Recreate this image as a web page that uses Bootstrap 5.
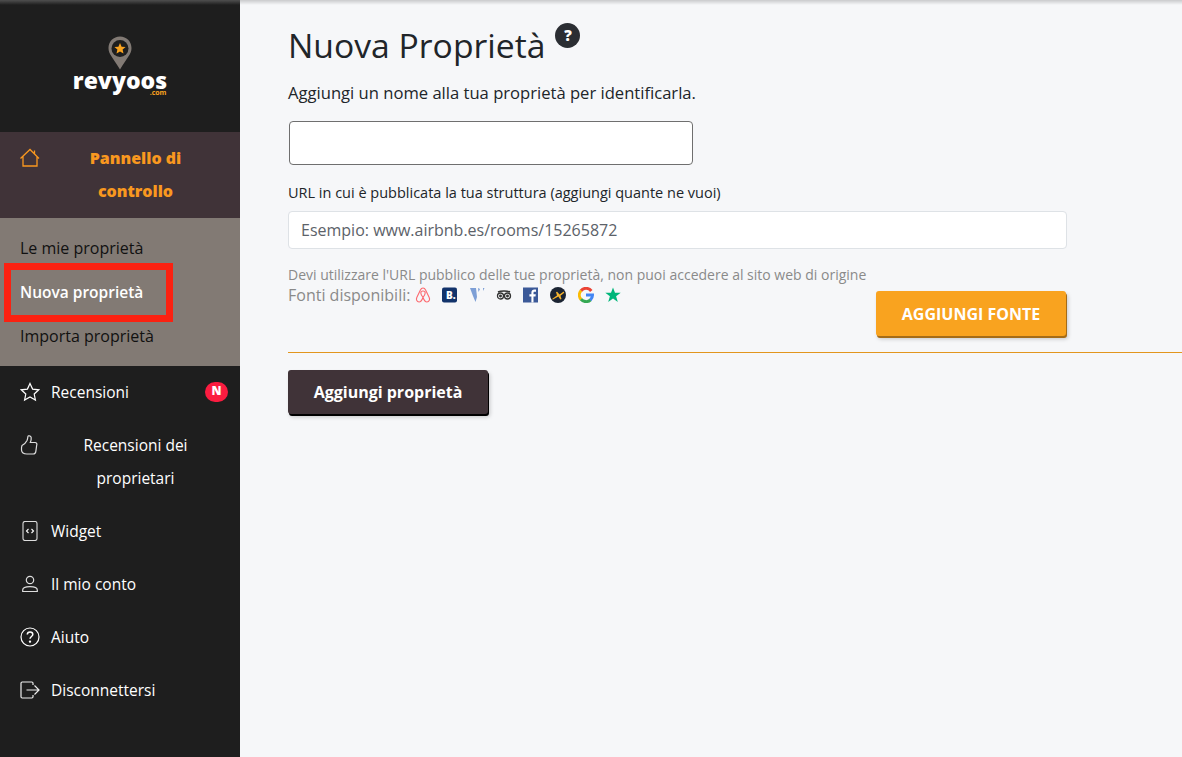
<!DOCTYPE html>
<html lang="it">
<head>
    <meta charset="UTF-8">
    <meta name="viewport" content="width=device-width, initial-scale=1.0">
    <title>Nuova Proprietà</title>
    <link rel="stylesheet" href="https://cdn.jsdelivr.net/npm/bootstrap@5.3.0/dist/css/bootstrap.min.css">
    <style>
        body { font-family: "Open Sans", sans-serif; background: #f6f7f9; color: #212529; height: 757px; overflow: hidden; position: relative; }
        .app-shell { height: 757px; }
        .side { width: 240px; background: #1e1e1e; flex-shrink: 0; position: relative; }
        .top-fade { position: absolute; top: 0; left: 0; right: 0; height: 5px; z-index: 2; pointer-events: none; background: linear-gradient(#0000002e, #0000); }
        .side .top-fade { background: linear-gradient(#ffffff38, #fff0); }
        .logo-area { height: 132px; padding-top: 36px; }
        .logo-word { color: #fff; font-weight: 800; font-size: 23px; line-height: 20px; }
        .logo-com { color: #f9a31f; font-size: 7px; line-height: 6px; font-weight: 700; text-align: right; width: 93px; }
        .menu-row { display: flex; align-items: flex-start; padding: 10px 20px; line-height: 33px; font-size: 15.5px; color: #fff; text-decoration: none; }
        .menu-row svg { flex-shrink: 0; width: 20px; height: 20px; margin: 6px 11px 0 0; }
        .menu-label { flex-grow: 1; }
        .menu-center { text-align: center; }
        .menu-active { background: #403338; color: #f9981f; font-weight: 800; font-size: 16px; }
        .sub-menu { background: #827a74; padding: 8px 0; }
        .sub-row { display: block; height: 44px; line-height: 44px; padding-left: 20px; color: #111; font-size: 16px; text-decoration: none; }
        .sub-row.on { color: #fff; font-weight: 600; font-size: 15.5px; }
        .new-pill { width: 23px; height: 20px; border-radius: 10px; background: #fb1c40; color: #fff; font-size: 12px; font-weight: 800; line-height: 18px; text-align: center; margin: 6px -8px 0 0; }
        .red-box { position: absolute; left: 4px; top: 263px; width: 169px; height: 59px; border: 7px solid #fb2111; z-index: 3; }
        .page-body { padding-left: 48px; padding-top: 23px; }
        .page-title { font-size: 33.7px; font-weight: 500; line-height: 44px; margin: 0; }
        .help-dot { width: 25px; height: 25px; border-radius: 50%; background: #2b2e33; color: #fff; font-size: 15px; font-weight: 800; line-height: 25px; text-align: center; margin-left: 10px; }
        .intro { font-size: 16.6px; line-height: 22px; margin: 15px 0 0; }
        .name-input { width: 404px; height: 44px; margin: 17px 0 0 1px; border-color: #6f6f6f; border-radius: 4px; background: #fff; }
        .url-label { font-size: 14.5px; line-height: 18px; margin: 19px 0 0; }
        .url-input { width: 779px; height: 38px; margin-top: 9px; font-size: 16px; color: #495057; border-radius: 4px; padding-left: 12px; }
        .url-input::placeholder { color: #5c6269; opacity: 1; }
        .hint { font-size: 14px; color: #8a8a8a; line-height: 18px; margin-top: 17px; }
        .sources-row { width: 779px; }
        .sources { font-size: 16px; color: #8a8a8a; line-height: 22px; }
        .sources svg { width: 16px; height: 16px; margin-left: 7px; vertical-align: -2px; }
        .sources svg:first-of-type { margin-left: 0; }
        .btn-source { background: #f9a31f; color: #fff; border: 0; border-radius: 3px; font-weight: 700; font-size: 16px; width: 190px; height: 45px; box-shadow: 1px 2px 0 #a56c17, 2px 3px 4px #0003; margin: 7px 1px 0 0; }
        .btn-source:hover { background: #f9a31f; color: #fff; }
        .gold-rule { height: 1px; background: #e2961e; margin: 16px 0 17px; }
        .btn-add { background: #403338; color: #fff; border: 0; border-radius: 3px; font-weight: 700; font-size: 16px; width: 200px; height: 44px; box-shadow: 1px 2px 0 #000, 2px 3px 4px #0003; }
        .btn-add:hover { background: #403338; color: #fff; }
    </style>
</head>
<body>
    <div class="app-shell d-flex">
        <nav class="side">
            <div class="top-fade"></div>
            <div class="logo-area d-flex flex-column align-items-center">
                <svg width="24" height="34" viewBox="0 0 24 34">
                    <path d="M12 0.500C5.500 .5 .5 5.500 .5 12c0 6 4 9 11.500 21.500C19.500 21 23.500 18 23.500 12 23.500 5.500 18.500 .5 12 .5z" fill="#827a74"/>
                    <circle cx="12" cy="12.500" r="8.500" fill="#1e1e1e"/>
                    <path d="M12 7l1.600 3.700 4 .3-3 2.600.9 3.900L12 15.500l-3.500 2 .9-3.900-3-2.600 4-.3z" fill="#f9a31f"/>
                </svg>
                <div class="logo-word">revyoos</div>
                <div class="logo-com">.com</div>
            </div>

            <a class="menu-row menu-active" href="#">
                <svg viewBox="0 0 20 20" fill="none" stroke="#f9981f" stroke-width="1.300"><path d="M.5 10.500 10 1.500l9 9M3 8.500V18h14V8.500M14.500 2.500v4"/></svg>
                <span class="menu-label menu-center">Pannello di<br>controllo</span>
            </a>
            <div class="sub-menu">
                <a class="sub-row" href="#">Le mie proprietà</a>
                <a class="sub-row on" href="#">Nuova proprietà</a>
                <a class="sub-row" href="#">Importa proprietà</a>
            </div>
            <a class="menu-row" href="#">
                <svg viewBox="0 0 20 20" fill="none" stroke="#fff" stroke-width="1.200"><path d="M10 1.500l2.600 5.600 6.100.7-4.500 4.200 1.200 6L10 15l-5.400 3 1.200-6-4.500-4.200 6.100-.7z"/></svg>
                <span class="menu-label">Recensioni</span>
                <span class="new-pill">N</span>
            </a>
            <a class="menu-row" href="#">
                <svg viewBox="0 0 20 20" fill="none" stroke="#ddd" stroke-width="1.200"><path d="M2 10.500c2-1 4-3 5-5 .6-1.300.7-2.800.9-4 .2-1.200 3-1 3.300 1 .2 1.800-.3 3.500-.9 5h4.700c1.800 0 2.200 1.600 1.700 2.700l-.9 6.500c-.2 1.500-1.200 2.300-2.500 2.300H7c-3 0-5.300-1-5.500-4-.1-1.800 0-3.500.5-4.500z"/></svg>
                <span class="menu-label menu-center">Recensioni dei<br>proprietari</span>
            </a>
            <a class="menu-row" href="#">
                <svg viewBox="0 0 20 20" fill="none" stroke="#ddd" stroke-width="1.100"><rect x="3" y=".5" width="14" height="19" rx="2"/><path d="M8.500 8 6.500 10l2 2M11.500 8l2 2-2 2" stroke="#fff"/></svg>
                <span class="menu-label">Widget</span>
            </a>
            <a class="menu-row" href="#">
                <svg viewBox="0 0 20 20" fill="none" stroke="#ddd" stroke-width="1.200"><circle cx="10" cy="6" r="3.700"/><path d="M2.700 17.500v-1.500c0-2 2-3.300 7.300-3.300s7.300 1.300 7.300 3.300v1.500z"/></svg>
                <span class="menu-label">Il mio conto</span>
            </a>
            <a class="menu-row" href="#">
                <svg viewBox="0 0 20 20" fill="none" stroke="#fff" stroke-width="1.200"><circle cx="10" cy="10" r="9"/><path d="M7.300 7.600c0-1.700 1.200-2.600 2.800-2.600 1.500 0 2.700 1 2.700 2.400 0 2-2.800 2.200-2.800 4.400" stroke-width="1.500"/><circle cx="10" cy="14.600" r=".6" fill="#fff"/></svg>
                <span class="menu-label">Aiuto</span>
            </a>
            <a class="menu-row" href="#">
                <svg viewBox="0 0 20 20" fill="none" stroke="#ddd" stroke-width="1.200"><path d="M13 5V3.200C13 2.500 12.500 2 11.800 2H2.200C1.500 2 1 2.500 1 3.200v13.600c0 .7.500 1.200 1.200 1.200h9.600c.7 0 1.200-.5 1.200-1.200V15M6.500 10h12.500M14.500 5.500 19 10l-4.500 4.500" stroke="#eee"/></svg>
                <span class="menu-label">Disconnettersi</span>
            </a>
        </nav>

        <main class="page-body flex-grow-1 position-relative">
            <div class="top-fade"></div>
            <div class="d-flex align-items-start">
                <h1 class="page-title">Nuova Proprietà</h1>
                <span class="help-dot">?</span>
            </div>
            <p class="intro">Aggiungi un nome alla tua proprietà per identificarla.</p>
            <input class="form-control name-input" type="text">
            <p class="url-label">URL in cui è pubblicata la tua struttura (aggiungi quante ne vuoi)</p>
            <input class="form-control url-input" type="text" placeholder="Esempio: www.airbnb.es/rooms/15265872">
            <div class="hint">Devi utilizzare l'URL pubblico delle tue proprietà, non puoi accedere al sito web di origine</div>
            <div class="sources-row d-flex justify-content-between align-items-start">
                <div class="sources">Fonti disponibili:
                    <svg viewBox="0 0 16 16" fill="none" stroke="#fc6a70" stroke-width="1.100"><path d="M8 10.500C6.500 8.500 5.800 7 5.800 6c0-1.300 1-2 2.200-2s2.200.7 2.200 2c0 1-.7 2.500-2.200 4.500zM8 1C6.800 1 6 1.700 5.400 3L1.800 10.500C.8 12.800 2 15 4 15c1.500 0 2.800-1.300 4-4.500 1.200 3.200 2.500 4.500 4 4.500 2 0 3.200-2.200 2.200-4.500L10.600 3C10 1.700 9.200 1 8 1z"/></svg>
                    <svg viewBox="0 0 16 16"><rect width="15" height="15" y=".5" rx="2" fill="#12336b"/><text x="4" y="12" fill="#fff" font-family="Open Sans" font-size="10" font-weight="800">B.</text></svg>
                    <svg viewBox="0 0 16 16" fill="#7d9fd6"><path d="M1 1h6l1 9-1.500 5L4 9zM9 1l2 1-1.500 3zM14 1h1.500L14 4z"/></svg>
                    <svg viewBox="0 0 16 16" fill="none" stroke="#333" stroke-width="1.300"><circle cx="4.500" cy="9" r="3"/><circle cx="11.500" cy="9" r="3"/><path d="M2 5c3-1.500 9-1.500 12 0" stroke-width="1.500"/><circle cx="4.500" cy="9" r=".8" fill="#333"/><circle cx="11.500" cy="9" r=".8" fill="#333"/></svg>
                    <svg viewBox="0 0 16 16"><rect y=".5" width="15" height="15" fill="#3b5998"/><path d="M10.500 15.500v-6h2l.3-2.300h-2.300V5.800c0-.7.2-1.100 1.100-1.100H13V2.600c-.2 0-.9-.1-1.700-.1-1.700 0-2.900 1-2.900 3v1.700h-2v2.300h2v6z" fill="#fff"/></svg>
                    <svg viewBox="0 0 16 16"><circle cx="8" cy="8" r="8" fill="#1b2433"/><path d="M2 12l5-3.500L6 5l1.200-.3L9.500 7.500 13 5c.8-.4 1.500.1 1 .9l-3.500 2.800 1 3.300-1.200.4-2-3L3 12.500z" fill="#f5b32e"/></svg>
                    <svg viewBox="0 0 16 16" fill="none" stroke-width="3"><path d="M13.300 4A6.500 6.500 0 0 0 3 3.700" stroke="#ea4335"/><path d="M3.100 3.600a6.500 6.500 0 0 0 0 8.800" stroke="#fbbc05"/><path d="M3 12.300a6.500 6.500 0 0 0 9.500.5" stroke="#34a853"/><path d="M12.300 13A6.500 6.500 0 0 0 14.500 8H8" stroke="#4285f4"/></svg>
                    <svg viewBox="0 0 16 16"><path d="M8 .5l2 5.300h5.700l-4.600 3.500 1.700 5.700L8 11.600 3.200 15l1.700-5.700L.3 5.800H6z" fill="#00b67a"/></svg>
                </div>
                <button class="btn btn-source" type="button">AGGIUNGI FONTE</button>
            </div>
            <div class="gold-rule"></div>
            <button class="btn btn-add" type="button">Aggiungi proprietà</button>
        </main>
    </div>
    <div class="red-box"></div>
    <script src="https://cdn.jsdelivr.net/npm/bootstrap@5.3.0/dist/js/bootstrap.bundle.min.js"></script>
</body>
</html>
